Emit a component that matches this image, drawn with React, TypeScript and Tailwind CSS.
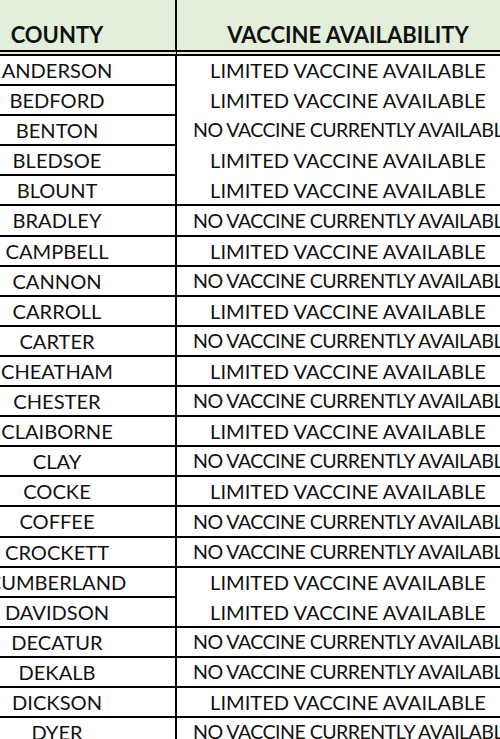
import React from "react";

type Row = { county: string; limited: boolean; noLine?: boolean };

const rows: Row[] = [
  { county: "ANDERSON", limited: true, noLine: true },
  { county: "BEDFORD", limited: true, noLine: true },
  { county: "BENTON", limited: false, noLine: true },
  { county: "BLEDSOE", limited: true, noLine: true },
  { county: "BLOUNT", limited: true },
  { county: "BRADLEY", limited: false },
  { county: "CAMPBELL", limited: true },
  { county: "CANNON", limited: false },
  { county: "CARROLL", limited: true },
  { county: "CARTER", limited: false },
  { county: "CHEATHAM", limited: true },
  { county: "CHESTER", limited: false },
  { county: "CLAIBORNE", limited: true },
  { county: "CLAY", limited: false },
  { county: "COCKE", limited: true },
  { county: "COFFEE", limited: false },
  { county: "CROCKETT", limited: false },
  { county: "CUMBERLAND", limited: true, noLine: true },
  { county: "DAVIDSON", limited: true },
  { county: "DECATUR", limited: false },
  { county: "DEKALB", limited: false },
  { county: "DICKSON", limited: true },
  { county: "DYER", limited: false },
];

export default function App() {
  return (
    <div
      className="w-[500px] h-[739px] overflow-hidden bg-white text-[#111111]"
      style={{ fontFamily: '"Lato", "Open Sans", sans-serif' }}
    >
      <div className="ml-[-61px] grid grid-cols-[238px_342px]">
        <div className="h-[56px] bg-[#e2efda] border-r-2 border-b-[6px] border-double border-b-black border-r-black flex justify-center items-center pt-[20px] text-[22px] font-bold leading-none">
          COUNTY
        </div>
        <div className="h-[56px] bg-[#e2efda] border-b-[6px] border-double border-black flex justify-center items-center pt-[20px] text-[22px] font-bold leading-none whitespace-nowrap">
          VACCINE AVAILABILITY
        </div>
        {rows.map((r) => (
          <React.Fragment key={r.county}>
            <div className="h-[30.1px] border-r-2 border-b-2 border-black flex items-center justify-center text-[20.1px] leading-none whitespace-nowrap">
              {r.county}
            </div>
            <div
              className={
                "h-[30.1px] border-b-2 flex items-center leading-none whitespace-nowrap overflow-hidden " +
                (r.noLine ? "border-transparent " : "border-black ") +
                (r.limited
                  ? "justify-center text-[20.1px]"
                  : "justify-start pl-[16px] text-[19.6px] tracking-[-0.55px]")
              }
            >
              {r.limited ? "LIMITED VACCINE AVAILABLE" : "NO VACCINE CURRENTLY AVAILABLE"}
            </div>
          </React.Fragment>
        ))}
      </div>
    </div>
  );
}
